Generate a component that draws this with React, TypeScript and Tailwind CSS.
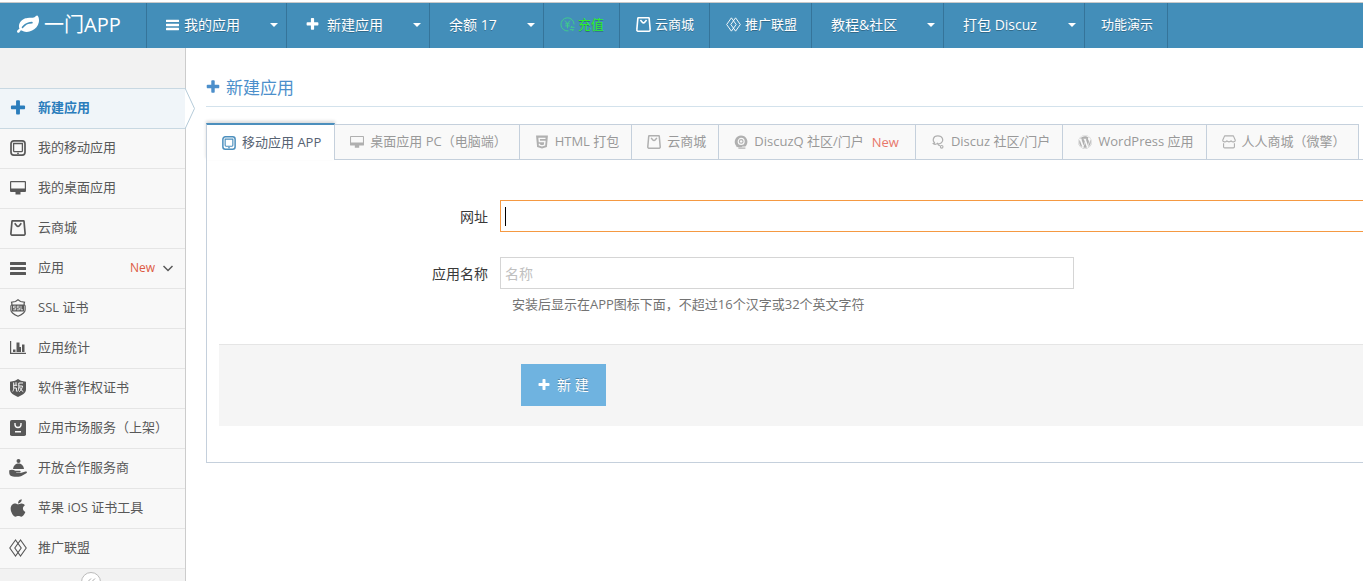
import React, { useState } from 'react';
import { FaApple, FaWordpress } from 'react-icons/fa';

type IconProps = { className?: string };

const PlusIcon: React.FC<IconProps> = ({ className }) => (
  <svg viewBox="0 0 1792 1792" fill="currentColor" className={className}>
    <path d="M1600 736v192q0 40-28 68t-68 28h-416v416q0 40-28 68t-68 28h-192q-40 0-68-28t-28-68v-416h-416q-40 0-68-28t-28-68v-192q0-40 28-68t68-28h416v-416q0-40 28-68t68-28h192q40 0 68 28t28 68v416h416q40 0 68 28t28 68z" />
  </svg>
);

const LeafIcon: React.FC<IconProps> = ({ className }) => (
  <svg viewBox="0 0 1792 1792" fill="currentColor" className={className}>
    <path d="M1280 704q0-26-19-45t-45-19q-172 0-318 49.5t-259.5 134-235.5 219.5q-19 21-19 45 0 26 19 45t45 19q24 0 45-19 27-24 74-71t67-66q137-124 268.5-176t313.5-52q26 0 45-19t19-45zm512-198q0 95-20 193-46 224-184.5 383t-357.5 268q-214 108-438 108-148 0-286-47-15-5-88-42t-96-37q-16 0-39.5 32t-45 70-52.5 70-60 32q-43 0-63.5-17.5t-45.5-59.5q-2-4-6-11t-5.5-10-3-9.5-1.5-13.5q0-35 31-73.5t68-65.5 68-56 31-48q0-4-14-38t-16-44q-9-51-9-104 0-115 43.5-220t119-184.5 170.5-139 204-95.5q55-18 145-25.5t179.5-9 178.5-6 163.5-24 113.5-56.5l29.5-29.5 29.5-28 27-20 36.5-16 43.5-4.5q39 0 70.5 46t47.5 112 24 124 8 96z" />
  </svg>
);

const BarsIcon: React.FC<IconProps> = ({ className }) => (
  <svg viewBox="0 0 16 16" fill="currentColor" className={className}>
    <rect y="2" width="16" height="3" rx=".5" />
    <rect y="7" width="16" height="3" rx=".5" />
    <rect y="12" width="16" height="3" rx=".5" />
  </svg>
);

const TabletIcon: React.FC<IconProps> = ({ className }) => (
  <svg viewBox="0 0 16 16" fill="none" stroke="currentColor" className={className}>
    <rect x="1" y=".9" width="14" height="14.2" rx="2.8" strokeWidth="1.7" />
    <path d="M3.600 3.500h8.800v7.200a1 1 0 0 1-1 1H4.600a1 1 0 0 1-1-1z" strokeWidth="1.300" />
    <circle cx="8" cy="13.300" r=".9" fill="currentColor" stroke="none" />
  </svg>
);

const DesktopIcon: React.FC<IconProps> = ({ className }) => (
  <svg viewBox="0 0 16 16" fill="currentColor" className={className}>
    <path fillRule="evenodd" d="M1 1h14a1 1 0 0 1 1 1v9a1 1 0 0 1-1 1h-4.500v2.500h-5V12H1a1 1 0 0 1-1-1V2a1 1 0 0 1 1-1zM1.200 2.200V8.500h13.600V2.200z" />
  </svg>
);

const BagIcon: React.FC<IconProps> = ({ className }) => (
  <svg viewBox="0 0 16 16" fill="none" stroke="currentColor" strokeWidth="1.7" className={className}>
    <path d="M2 1.200a.8.8 0 0 1 .8-.4h10.400a.8.8 0 0 1 .8.4l1.100 12.300a1.500 1.500 0 0 1-1.500 1.700H2.400a1.500 1.500 0 0 1-1.500-1.700z" strokeLinejoin="round" />
    <path d="M4.700 3.300l2 2.400a1.700 1.700 0 0 0 2.600 0l2-2.400" />
  </svg>
);

const SslIcon: React.FC<IconProps> = ({ className }) => (
  <svg viewBox="0 0 18 18" fill="none" stroke="currentColor" className={className}>
    <path d="M9 .8l2.500 1.700 4 .7-.5 2 1.100 1.800v4c0 3-3.500 4.700-7.100 6.200-3.600-1.500-7.100-3.200-7.100-6.200V7L3 5.200l-.5-2 4-.7z" strokeWidth="1.200" />
    <rect x="3" y="5.500" width="12" height="7" fill="currentColor" stroke="none" />
    <path d="M6.800 7.200H4.500v1.700h2.200v1.900H4.300M10.500 7.200H8.200v1.700h2.200v1.900H8M12 6.800v4h2" stroke="#f8f8f8" strokeWidth=".8" />
  </svg>
);

const ChartIcon: React.FC<IconProps> = ({ className }) => (
  <svg viewBox="0 0 16 16" fill="currentColor" className={className}>
    <path d="M0 1h1.200v11.800H16V14H0zM3 9.500h2.500V12H3zM6.500 2.500h3V12h-3zM9.500 7h1.500v5H9.500zM12 4.500h2.500V12H12z" />
  </svg>
);

const CopyrightShieldIcon: React.FC<IconProps> = ({ className }) => (
  <svg viewBox="0 0 18 18" className={className}>
    <path fill="currentColor" d="M9 0l3 1.800 5 .9v7.800c0 3.500-4 5.700-8 7.500-4-1.800-8-4-8-7.500V2.700l5-.9z" />
    <path
      fill="none"
      stroke="#f8f8f8"
      strokeWidth="1"
      d="M4.700 3.500v4.500c0 2-.2 3.500-1 4.500M7 3.200v3M4.700 6.300h3.500M4.900 9h2.500v3.500M14 4H9.800v3.500c0 2-.2 3.800-1.200 5M9.800 7h3.700c-.4 2.500-1.600 4.500-3.300 5.700M10.700 8c.7 2.200 1.900 3.800 3.600 4.700"
    />
  </svg>
);

const MarketIcon: React.FC<IconProps> = ({ className }) => (
  <svg viewBox="0 0 16 16" className={className}>
    <rect width="16" height="16" rx="1.800" fill="currentColor" />
    <path d="M5 3v1.500a3 3 0 0 0 6 0V3M5 11.700h6" fill="none" stroke="#f8f8f8" strokeWidth="1.400" />
  </svg>
);

const ServiceIcon: React.FC<IconProps> = ({ className }) => (
  <svg viewBox="0 0 18 18" fill="currentColor" className={className}>
    <circle cx="9.500" cy="2" r="2" />
    <path d="M4 10c.3-3.200 2.500-5.200 4.500-5.500h2c2 .3 4.200 2.300 4.500 5.500z" />
    <path d="M.3 11.200c2-.9 4.200-.7 6 .5h4.200c1.500 0 1.500 1.900 0 1.900H7.200v.5h4.300l5-1.600c1.500-.4 2 1.200.8 1.800L12.500 17c-1 .5-2 .7-3.200.7-3 0-6.500.2-8.300-1.500C.1 15 .1 13 .3 11.200z" />
  </svg>
);

const DiamondsIcon: React.FC<IconProps> = ({ className }) => (
  <svg viewBox="0 0 18 18" fill="none" stroke="currentColor" strokeWidth="1.100" className={className}>
    <path d="M6.500 1L.8 9l5.700 8 5.700-8z" />
    <path d="M11.500 1L5.800 9l5.700 8 5.700-8z" />
  </svg>
);

const RechargeIcon: React.FC<IconProps> = ({ className }) => (
  <svg viewBox="0 0 16 16" fill="none" stroke="currentColor" className={className}>
    <path d="M9 14.800A7 7 0 1 1 15 8" />
    <path d="M5.200 3.800L8 7l2.800-3.200M8 7v5M5.500 7.300h5M5.500 9.500h5M15.500 11h-4l1.500-1.500M10.500 13.500h4L13 15" />
  </svg>
);

const Html5Icon: React.FC<IconProps> = ({ className }) => (
  <svg viewBox="0 0 16 16" className={className}>
    <path fill="currentColor" d="M1.200.5h13.600l-1.200 13.200L8 15.500l-5.600-1.800z" />
    <path d="M12 3.800H4.700l.3 3.700h6.300l-.4 4L8 12.400l-2.900-.9-.1-1.500" fill="none" stroke="#f9f9f9" strokeWidth="1.600" />
  </svg>
);

const DiscuzQIcon: React.FC<IconProps> = ({ className }) => (
  <svg viewBox="0 0 16 16" className={className}>
    <path fill="currentColor" d="M8 .5a7.300 7.300 0 0 1 6.200 11.100L13 13H9.500l-.8 1H4.500l-2.300-2A7.300 7.300 0 0 1 8 .5z" />
    <circle cx="8.200" cy="7.300" r="3.400" fill="none" stroke="#f9f9f9" strokeWidth="1.300" />
    <circle cx="8.200" cy="7.300" r="1.400" fill="#f9f9f9" />
    <path d="M5 11.500l-2 2M5 15h8" stroke="currentColor" strokeWidth="1.200" />
  </svg>
);

const DiscuzIcon: React.FC<IconProps> = ({ className }) => (
  <svg viewBox="0 0 16 16" fill="none" stroke="currentColor" strokeWidth="1.300" className={className}>
    <path d="M4.500 9C1.200 7 2 1 7.800 1c5.700 0 7.200 5.500 3.700 8.200-.9.700-2 .9-3 .6M4.500 9l-2 .8c1.500 1.200 3.500 1 5-.2.300 1.500 1.300 2.500 3 2.700" />
    <circle cx="12.200" cy="13.500" r="1.500" />
  </svg>
);

const StoreIcon: React.FC<IconProps> = ({ className }) => (
  <svg viewBox="0 0 16 16" fill="none" stroke="currentColor" strokeWidth="1.300" className={className}>
    <path d="M3 1h10l2.200 5c0 2.300-3.300 2.500-4.800.6-1 1.600-3.800 1.600-4.800 0C4.100 8.500.8 8.300.8 6z" strokeLinejoin="round" />
    <path d="M1.800 9.500v4a1.200 1.200 0 0 0 1.200 1.200h10a1.200 1.200 0 0 0 1.200-1.200v-4" />
  </svg>
);

const Caret = () => <span className="border-x-4 border-t-4 border-x-transparent border-t-white" />;

const navItems = [
  { label: '我的应用', icon: BarsIcon, iconClass: 'w-[13px] h-[13px] mr-[5px]', cls: 'w-[140px] pl-[19px] text-sm', caret: true },
  { label: '新建应用', icon: PlusIcon, iconClass: 'w-[15px] h-[15px] mr-[7px]', cls: 'w-[143px] pl-[18px] text-sm', caret: true },
  { label: '余额 17', cls: 'w-[114px] pl-[19px] text-sm', caret: true },
  { label: '充值', icon: RechargeIcon, iconClass: 'w-[15px] h-[15px] mr-[3px] text-[#3fcf8a]', cls: 'w-[76px] pl-4 text-[13px] text-[#2cf02c]' },
  { label: '云商城', icon: BagIcon, iconClass: 'w-[15px] h-[15px] mr-1', cls: 'w-[90px] pl-4 text-[13px]' },
  { label: '推广联盟', icon: DiamondsIcon, iconClass: 'w-[15px] h-[15px] mr-1', cls: 'w-[102px] pl-4 text-[13px]' },
  { label: '教程&社区', cls: 'w-[132px] pl-[19px] text-sm', caret: true },
  { label: '打包 Discuz', cls: 'w-[141px] pl-[19px] text-sm', caret: true },
  { label: '功能演示', cls: 'w-[83px] pl-4 text-[13px]' },
];

const sideItems = [
  { label: '新建应用', icon: PlusIcon, size: 'w-[18px] h-[18px]' },
  { label: '我的移动应用', icon: TabletIcon, size: 'size-4' },
  { label: '我的桌面应用', icon: DesktopIcon, size: 'size-4' },
  { label: '云商城', icon: BagIcon, size: 'size-4' },
  { label: '应用', icon: BarsIcon, size: 'size-4', isNew: true },
  { label: 'SSL 证书', icon: SslIcon, size: 'w-[18px] h-[18px]' },
  { label: '应用统计', icon: ChartIcon, size: 'size-4' },
  { label: '软件著作权证书', icon: CopyrightShieldIcon, size: 'w-[18px] h-[18px]' },
  { label: '应用市场服务（上架）', icon: MarketIcon, size: 'size-4' },
  { label: '开放合作服务商', icon: ServiceIcon, size: 'w-[18px] h-[18px]' },
  { label: '苹果 iOS 证书工具', icon: FaApple, size: 'w-5 h-5' },
  { label: '推广联盟', icon: DiamondsIcon, size: 'w-[18px] h-[18px]' },
];

const tabs = [
  { label: '移动应用 APP', icon: TabletIcon },
  { label: '桌面应用 PC（电脑端）', icon: DesktopIcon },
  { label: 'HTML 打包', icon: Html5Icon },
  { label: '云商城', icon: BagIcon },
  { label: 'DiscuzQ 社区/门户', icon: DiscuzQIcon, isNew: true },
  { label: 'Discuz 社区/门户', icon: DiscuzIcon },
  { label: 'WordPress 应用', icon: FaWordpress },
  { label: '人人商城（微擎）', icon: StoreIcon },
];

const Navbar = () => (
  <header className="mt-[2px] border-t border-[#c9c9c9] bg-[#438eb9] text-white">
    <nav className="flex h-[45px] [text-shadow:0_1px_0_rgba(0,0,0,0.25)]">
      <a href="#" className="flex w-[147px] shrink-0 items-center gap-[5px] whitespace-nowrap border-r border-[#35749a] pb-[2px] pl-[17px] text-xl [text-shadow:none]">
        <LeafIcon className="w-[22px] h-[22px]" />
        一门APP
      </a>
      {navItems.map(({ label, icon: Icon, iconClass, cls, caret }) => (
        <a key={label} href="#" className={`flex shrink-0 items-center whitespace-nowrap border-r border-[#35749a] pb-[2px] pr-2 ${cls}`}>
          {Icon && <Icon className={iconClass} />}
          <span className="flex-1">{label}</span>
          {caret && <Caret />}
        </a>
      ))}
    </nav>
  </header>
);

const Sidebar = () => (
  <aside className="w-[186px] shrink-0 border-r border-[#ccc] bg-[#f2f2f2] pt-10">
    <ul>
      {sideItems.map(({ label, icon: Icon, size, isNew }, i) => (
        <li
          key={label}
          className={`relative ${i === 0 ? 'h-[41px] border-y border-[#c8d8e2] bg-[#f0f5f9] font-bold text-[#2b7dbc]' : 'h-10 border-b border-[#e5e5e5] bg-[#f8f8f8] text-[#585858]'}`}
        >
          <a href="#" className="flex h-full items-center whitespace-nowrap pb-[2px]">
            <span className="mr-[2px] flex w-9 justify-center">
              <Icon className={size} />
            </span>
            <span className="flex-1">{label}</span>
            {isNew && (
              <>
                <span className="mr-2 text-xs text-[#dd5a43]">New</span>
                <svg viewBox="0 0 10 10" className="mr-3 w-[10px] h-[10px]" fill="none" stroke="currentColor" strokeWidth="1.500">
                  <path d="M.5 3L5 7.500 9.500 3" />
                </svg>
              </>
            )}
          </a>
          {i === 0 && (
            <svg viewBox="0 0 11 41" className="absolute -top-px -right-[11px] w-[11px] h-[41px]">
              <path d="M0 0L9.500 20.500 0 41" fill="#fff" stroke="#b5cbd9" />
            </svg>
          )}
        </li>
      ))}
    </ul>
    <div className="flex justify-center pr-[3px] pt-[3px]">
      <button aria-label="收起菜单" className="flex h-5 w-5 items-center justify-center rounded-full border border-[#bbb] bg-white text-[#aaa]">
        <svg viewBox="0 0 10 10" className="w-[10px] h-[10px]" fill="none" stroke="currentColor">
          <path d="M5 1.500L1.500 5 5 8.500M9 1.500L5.500 5 9 8.500" />
        </svg>
      </button>
    </div>
  </aside>
);

const CreateForm = () => {
  const [url, setUrl] = useState('');
  const [name, setName] = useState('');

  return (
    <form className="border-b border-l border-[#c5d0dc] pb-9 pl-3 pt-10" onSubmit={(e) => e.preventDefault()}>
      <div className="flex items-center text-sm">
        <label htmlFor="url" className="mr-3 w-[269px] shrink-0 pt-[2px] text-right text-[#393939]">网址</label>
        <div className="relative flex-1">
          <input
            id="url"
            value={url}
            onChange={(e) => setUrl(e.target.value)}
            className="block h-8 w-full border-y border-l border-[#f59942] bg-white px-1 text-[#696969] outline-none"
          />
          {!url && <span className="pointer-events-none absolute left-[5px] top-[7px] h-[19px] w-px bg-black" />}
        </div>
      </div>
      <div className="mt-[25px] flex items-center text-sm">
        <label htmlFor="name" className="mr-3 w-[269px] shrink-0 pt-[2px] text-right text-[#393939]">应用名称</label>
        <input
          id="name"
          value={name}
          onChange={(e) => setName(e.target.value)}
          placeholder="名称"
          className="h-8 w-[574px] border border-[#d5d5d5] bg-white px-1 text-[#696969] outline-none placeholder:text-[#c0c0c0]"
        />
      </div>
      <p className="ml-[293px] mt-[3px] leading-6 text-[#737373]">安装后显示在APP图标下面，不超过16个汉字或32个英文字符</p>
      <div className="mt-7 border-t border-[#e5e5e5] bg-[#f5f5f5] pb-5 pl-[302px] pt-[19px]">
        <button type="submit" className="flex h-[42px] items-center bg-[#6fb3e0] pl-4 pr-[17px] text-sm text-white [text-shadow:0_-1px_0_rgba(0,0,0,0.25)]">
          <PlusIcon className="mr-[6px] w-[14px] h-[14px]" />
          新 建
        </button>
      </div>
    </form>
  );
};

const App: React.FC = () => {
  const [active, setActive] = useState(0);

  return (
    <div className="flex h-screen flex-col overflow-hidden bg-white font-['Open_Sans','Noto_Sans_CJK_SC',sans-serif] text-[13px]">
      <Navbar />
      <div className="flex flex-1">
        <Sidebar />
        <main className="min-w-0 flex-1 pl-5 pt-[26px]">
          <h1 className="flex h-[33px] items-start gap-[5px] border-b border-[#d3e2ec] text-[17px] leading-7 text-[#4c8fcb]">
            <PlusIcon className="mt-[5px] -ml-px w-4 h-4" />
            新建应用
          </h1>
          <div role="tablist" className="mt-4 flex items-end">
            {tabs.map(({ label, icon: Icon, isNew }, i) => (
              <button
                key={label}
                role="tab"
                aria-selected={active === i}
                onClick={() => setActive(i)}
                className={`flex shrink-0 items-center whitespace-nowrap border-r border-[#c5d0dc] pl-[14px] ${
                  active === i
                    ? 'h-[37px] border-l border-t-2 border-t-[#4c8fbd] bg-white pr-[13px] text-[#576373] shadow-[0_-2px_3px_0_rgba(0,0,0,0.15)]'
                    : 'h-9 border-y bg-[#f9f9f9] pr-3 text-[#999]'
                }`}
              >
                <Icon className={`mr-[5px] h-[14px] w-4 ${active === i ? 'text-[#4c8fbd]' : 'text-[#b0b0b0]'}`} />
                {label}
                {isNew && <span className="ml-2 mr-1 pt-[2px] text-[#e8776a]">New</span>}
              </button>
            ))}
            <span className="flex-1 border-b border-[#c5d0dc]" />
          </div>
          <CreateForm />
        </main>
      </div>
    </div>
  );
};

export default App;
